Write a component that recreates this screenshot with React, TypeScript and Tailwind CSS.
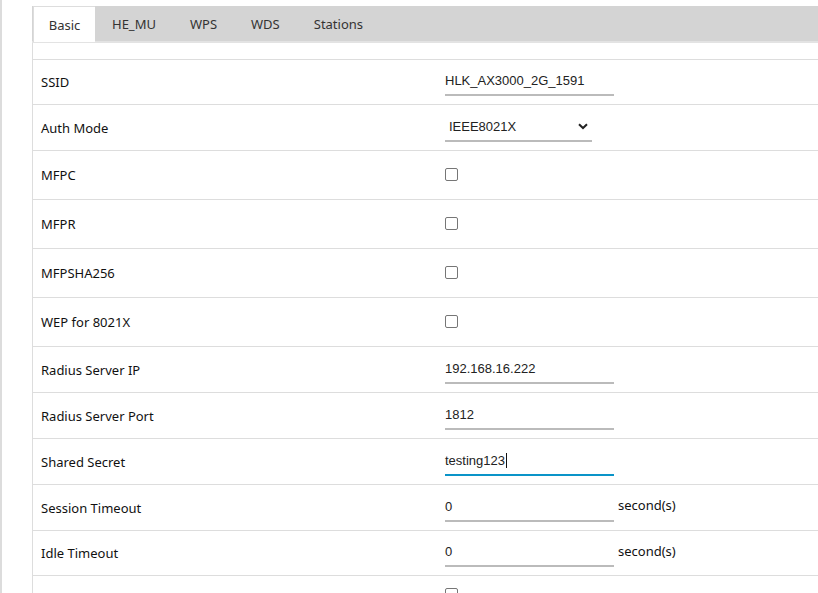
import React from "react";

const labelFont = { fontFamily: '"Noto Sans", "Open Sans", sans-serif' };

function TextInput({ value, focused, caret }: { value: string; focused?: boolean; caret?: boolean }) {
  return (
    <div
      className={
        "w-[169px] h-[28px] flex items-center border-b-2 text-[13px] text-[#222] font-['Liberation_Sans',Arial,sans-serif] " +
        (focused ? "border-[#0a94c8]" : "border-[#bbbbbb]")
      }
    >
      <span>{value}</span>
      {caret && <span className="inline-block w-px h-[15px] bg-[#111] ml-[1px]" />}
    </div>
  );
}

function Check() {
  return <span className="block w-[13px] h-[13px] -mt-[2px] border border-[#767676] rounded-[2px] bg-white" />;
}

function Row({ label, h, children }: { label?: string; h: string; children?: React.ReactNode }) {
  return (
    <div className={"flex items-center border-t border-[#dddddd] " + h}>
      <div className="w-[412px] pl-[8px] pt-[2px] text-[13px] text-[#111]" style={labelFont}>
        {label}
      </div>
      <div className="flex items-center">{children}</div>
    </div>
  );
}

export default function App() {
  const tabs = ["HE_MU", "WPS", "WDS", "Stations"];
  return (
    <div className="w-[818px] h-[593px] overflow-hidden bg-white flex">
      <div className="w-[2px] h-full bg-[#dcdcdc] shrink-0" />
      <div className="ml-[30px] flex-1 pt-[6px] flex flex-col">
        <div className="h-[37px] bg-[#d4d4d4] border-b-2 border-[#e3e3e3] flex text-[13px] text-[#333]" style={labelFont}>
          <div className="bg-white border-l border-t border-[#dddddd] w-[62px] h-[36px] pt-[2px] flex items-center justify-center ml-[1px]">
            Basic
          </div>
          <div className="flex items-center gap-[34px] pl-[17px] pt-[2px]">
            {tabs.map((t) => (
              <span key={t}>{t}</span>
            ))}
          </div>
        </div>
        <div className="flex-1 border-l border-[#dddddd] pt-[16px]">
          <Row label="SSID" h="h-[45px]">
            <TextInput value="HLK_AX3000_2G_1591" />
          </Row>
          <Row label="Auth Mode" h="h-[46px]">
            <div className="w-[147px] h-[28px] flex items-center justify-between pl-[4px] pr-[4px] border-b-2 border-[#bbbbbb] text-[13px] text-[#222] font-['Liberation_Sans',Arial,sans-serif]">
              <span>IEEE8021X</span>
              <svg width="10" height="7" viewBox="0 0 10 7">
                <path d="M1 1.2 L5 5 L9 1.2" stroke="#222" strokeWidth="2" fill="none" />
              </svg>
            </div>
          </Row>
          <Row label="MFPC" h="h-[49px]">
            <Check />
          </Row>
          <Row label="MFPR" h="h-[49px]">
            <Check />
          </Row>
          <Row label="MFPSHA256" h="h-[49px]">
            <Check />
          </Row>
          <Row label="WEP for 8021X" h="h-[49px]">
            <Check />
          </Row>
          <Row label="Radius Server IP" h="h-[46px]">
            <TextInput value="192.168.16.222" />
          </Row>
          <Row label="Radius Server Port" h="h-[46px]">
            <TextInput value="1812" />
          </Row>
          <Row label="Shared Secret" h="h-[46px]">
            <TextInput value="testing123" focused caret />
          </Row>
          <Row label="Session Timeout" h="h-[46px]">
            <TextInput value="0" />
            <span className="ml-[4px] -mt-[3px] text-[13px] text-[#111]" style={labelFont}>
              second(s)
            </span>
          </Row>
          <Row label="Idle Timeout" h="h-[45px]">
            <TextInput value="0" />
            <span className="ml-[4px] -mt-[3px] text-[13px] text-[#111]" style={labelFont}>
              second(s)
            </span>
          </Row>
          <div className="flex items-start border-t border-[#dddddd] h-[49px]">
            <div className="w-[412px]" />
            <div className="pt-[14px]">
              <Check />
            </div>
          </div>
        </div>
      </div>
    </div>
  );
}
